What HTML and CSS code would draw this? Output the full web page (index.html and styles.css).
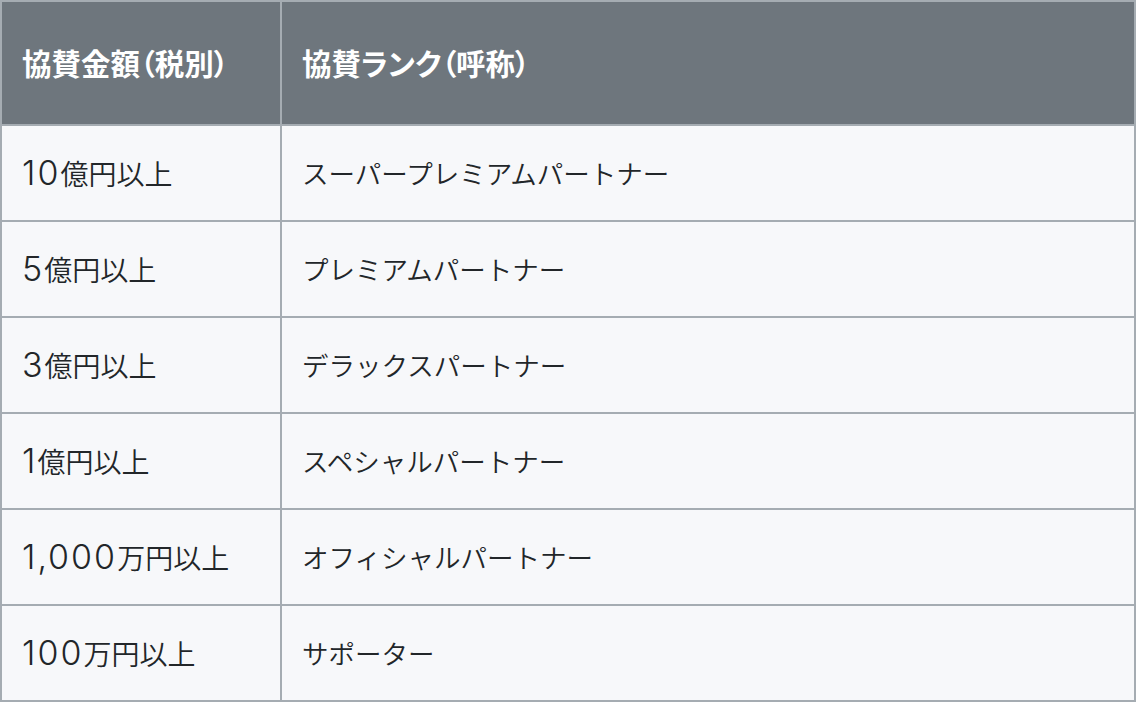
FILE: index.html
```html
<!DOCTYPE html>
<html lang="ja">
<head>
<meta charset="utf-8">
<title>協賛ランク</title>
<link rel="stylesheet" href="styles.css">
</head>
<body>
<table class="rank-table">
  <thead>
    <tr>
      <th class="col-amount">協賛金額（税別）</th>
      <th class="col-rank">協賛ランク（呼称）</th>
    </tr>
  </thead>
  <tbody>
    <tr><td class="amount"><span class="num">10</span>億円以上</td><td>スーパープレミアムパートナー</td></tr>
    <tr><td class="amount"><span class="num">5</span>億円以上</td><td>プレミアムパートナー</td></tr>
    <tr><td class="amount"><span class="num">3</span>億円以上</td><td>デラックスパートナー</td></tr>
    <tr><td class="amount"><span class="num">1</span>億円以上</td><td>スペシャルパートナー</td></tr>
    <tr><td class="amount"><span class="num">1,000</span>万円以上</td><td>オフィシャルパートナー</td></tr>
    <tr><td class="amount"><span class="num">100</span>万円以上</td><td>サポーター</td></tr>
  </tbody>
</table>
</body>
</html>
```
FILE: styles.css
```css
html, body {
  margin: 0;
  padding: 0;
  background: #f7f8fa;
}
body {
  font-family: "Noto Sans CJK JP", "Noto Sans", sans-serif;
  color: #222629;
}
.rank-table {
  width: 1136px;
  table-layout: fixed;
  border-collapse: separate;
  border-spacing: 0;
  border-top: 2px solid #a5acb2;
  border-left: 2px solid #a5acb2;
}
.rank-table th,
.rank-table td {
  box-sizing: border-box;
  border-right: 2px solid #a5acb2;
  border-bottom: 2px solid #a5acb2;
  padding: 0 0 0 20px;
  text-align: left;
  vertical-align: middle;
  line-height: 1;
  white-space: nowrap;
}
.rank-table th {
  height: 124px;
  background: #6e767d;
  color: #ffffff;
  font-size: 29.5px;
  font-weight: 700;
  font-feature-settings: "palt";
}
.rank-table td {
  height: 96px;
  background: #f7f8fa;
  font-size: 26.5px;
  font-weight: 350;
}
.rank-table td.amount {
  font-size: 28px;
}
.num {
  font-family: Inter, "Noto Sans", sans-serif;
  font-size: 34px;
  font-weight: 300;
  letter-spacing: 2px;
  font-variant-numeric: proportional-nums;
}
.col-amount {
  width: 280px;
}
```
